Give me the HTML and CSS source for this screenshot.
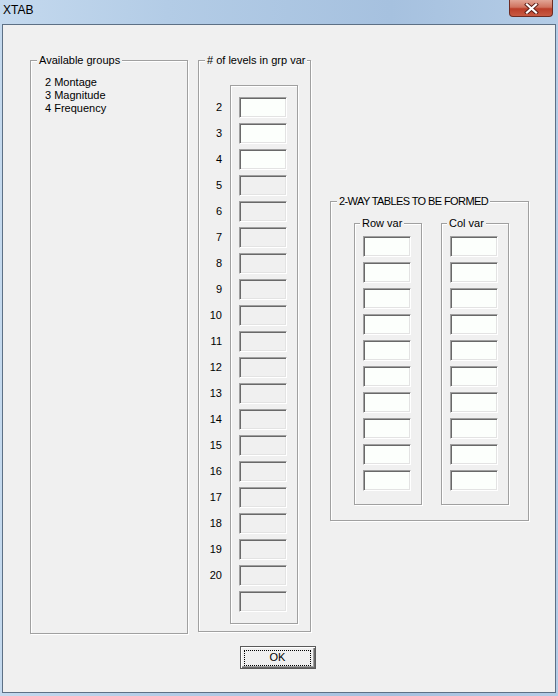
FILE: index.html
```html
<!DOCTYPE html>
<html>
<head>
<meta charset="utf-8">
<title>XTAB</title>
<link rel="stylesheet" href="styles.css">
</head>
<body>
<div class="window">
  <div class="titlebar">
    <span class="title">XTAB</span>
    <div class="close">
      <svg width="15" height="11" viewBox="0 0 15 11">
        <path d="M3 1.5 L12 9.5 M12 1.5 L3 9.5" stroke="#5a1d16" stroke-width="4" stroke-linecap="square" fill="none"/>
        <path d="M3 1.5 L12 9.5 M12 1.5 L3 9.5" stroke="#ffffff" stroke-width="2.2" stroke-linecap="square" fill="none"/>
      </svg>
    </div>
  </div>
  <div class="client">
    <div class="main">
      <div class="group avail">
        <div class="legend">Available groups</div>
        <ul class="list">
          <li>2&nbsp;Montage</li>
          <li>3&nbsp;Magnitude</li>
          <li>4&nbsp;Frequency</li>
        </ul>
      </div>
      <div class="group levels">
        <div class="legend"># of levels in grp var</div>
        <div class="levels-body">
          <div class="labels">
            <div class="lab">2</div><div class="lab">3</div><div class="lab">4</div><div class="lab">5</div>
            <div class="lab">6</div><div class="lab">7</div><div class="lab">8</div><div class="lab">9</div>
            <div class="lab">10</div><div class="lab">11</div><div class="lab">12</div><div class="lab">13</div>
            <div class="lab">14</div><div class="lab">15</div><div class="lab">16</div><div class="lab">17</div>
            <div class="lab">18</div><div class="lab">19</div><div class="lab">20</div>
          </div>
          <div class="panel">
            <div class="tb on"></div><div class="tb on"></div><div class="tb on"></div><div class="tb"></div>
            <div class="tb"></div><div class="tb"></div><div class="tb"></div><div class="tb"></div>
            <div class="tb"></div><div class="tb"></div><div class="tb"></div><div class="tb"></div>
            <div class="tb"></div><div class="tb"></div><div class="tb"></div><div class="tb"></div>
            <div class="tb"></div><div class="tb"></div><div class="tb"></div><div class="tb"></div>
          </div>
        </div>
      </div>
      <div class="group tables">
        <div class="legend caps">2-WAY TABLES TO BE FORMED</div>
        <div class="cols">
          <div class="group sub">
            <div class="legend sublegend">Row var</div>
            <div class="stack">
              <div class="tb on"></div><div class="tb on"></div><div class="tb on"></div><div class="tb on"></div><div class="tb on"></div>
              <div class="tb on"></div><div class="tb on"></div><div class="tb on"></div><div class="tb on"></div><div class="tb on"></div>
            </div>
          </div>
          <div class="group sub">
            <div class="legend sublegend">Col var</div>
            <div class="stack">
              <div class="tb on"></div><div class="tb on"></div><div class="tb on"></div><div class="tb on"></div><div class="tb on"></div>
              <div class="tb on"></div><div class="tb on"></div><div class="tb on"></div><div class="tb on"></div><div class="tb on"></div>
            </div>
          </div>
        </div>
      </div>
    </div>
    <div class="actions">
      <button class="ok"><span class="focus">OK</span></button>
    </div>
  </div>
</div>
</body>
</html>
```
FILE: styles.css
```css
* { box-sizing: border-box; }
html, body { margin: 0; padding: 0; }
body {
  width: 558px;
  height: 696px;
  overflow: hidden;
  font-family: "Liberation Sans", Arial, sans-serif;
  font-size: 11px;
  color: #000;
}
.window {
  width: 558px;
  height: 696px;
  background: linear-gradient(to right, #c4d9ee 0%, #b3cce6 30%, #a6c1df 70%, #b4cce6 100%);
  display: flex;
  flex-direction: column;
  padding: 0 2px 3px 2px;
}
.titlebar {
  height: 24px;
  display: flex;
  align-items: flex-start;
  justify-content: space-between;
}
.title {
  font-size: 12px;
  line-height: 21px;
  padding-left: 1px;
  color: #000;
}
.close {
  width: 44px;
  height: 17px;
  margin-right: 3px;
  border: 1px solid #6e2b22;
  border-top: none;
  border-radius: 0 0 4px 4px;
  background: linear-gradient(#e2a596 0%, #d0735f 45%, #bb3e29 55%, #c85a43 100%);
  display: flex;
  align-items: center;
  justify-content: center;
}
.client {
  width: 554px;
  height: 670px;
  border: 1px solid #5d7085;
  background: #f0f0f0;
}
.main {
  display: flex;
  align-items: flex-start;
  padding: 35px 0 0 27px;
}
.group {
  border: 1px solid #a0a0a0;
  box-shadow: inset 1px 1px 0 #fff, 1px 1px 0 #fff;
}
.legend {
  display: table;
  margin: -7px 0 0 6px;
  padding: 0 2px;
  background: #f0f0f0;
  line-height: 13px;
  white-space: nowrap;
}
.caps { letter-spacing: -0.6px; }
.sublegend { margin-left: 5px; }
.avail {
  width: 158px;
  height: 574px;
}
.list {
  list-style: none;
  margin: 9px 0 0 0;
  padding: 0 0 0 14px;
  line-height: 13px;
}
.levels {
  width: 113px;
  height: 572px;
  margin-left: 10px;
}
.levels-body {
  display: flex;
  margin-top: 18px;
}
.labels {
  width: 31px;
  padding: 12px 8px 0 0;
  text-align: right;
}
.lab {
  height: 21px;
  line-height: 21px;
  margin-bottom: 5px;
}
.panel {
  width: 68px;
  height: 539px;
  border: 1px solid #a0a0a0;
  box-shadow: inset 1px 1px 0 #fff, 1px 1px 0 #fff;
  padding: 11px 0 0 8px;
}
.tb {
  width: 48px;
  height: 21px;
  margin-bottom: 5px;
  background: #f0f0f0;
  border: 1px solid;
  border-color: #a0a0a0 #ffffff #ffffff #a0a0a0;
  box-shadow: inset 1px 1px 0 #696969, inset -1px -1px 0 #e3e3e3;
}
.tb.on { background: #fcfffc; }
.tables {
  width: 199px;
  height: 320px;
  margin: 141px 0 0 19px;
}
.cols {
  display: flex;
  gap: 19px;
  margin-top: 15px;
  padding-left: 23px;
}
.sub {
  width: 68px;
  height: 282px;
}
.stack {
  margin-top: 6px;
  padding-left: 8px;
}
.actions {
  padding-left: 237px;
  margin-top: 12px;
}
.ok {
  width: 76px;
  height: 23px;
  padding: 3px 4px 2px 3px;
  margin: 0;
  display: flex;
  background: #f0f0f0;
  border: 1px solid #5a5a5a;
  box-shadow: inset 1px 1px 0 #fff, inset -1px -1px 0 #696969, inset -2px -2px 0 #a0a0a0;
  font-family: "Liberation Sans", Arial, sans-serif;
  font-size: 11px;
  color: #000;
}
.focus {
  flex: 1;
  border: 1px dotted #000;
  display: flex;
  align-items: center;
  justify-content: center;
  line-height: 13px;
}
```
